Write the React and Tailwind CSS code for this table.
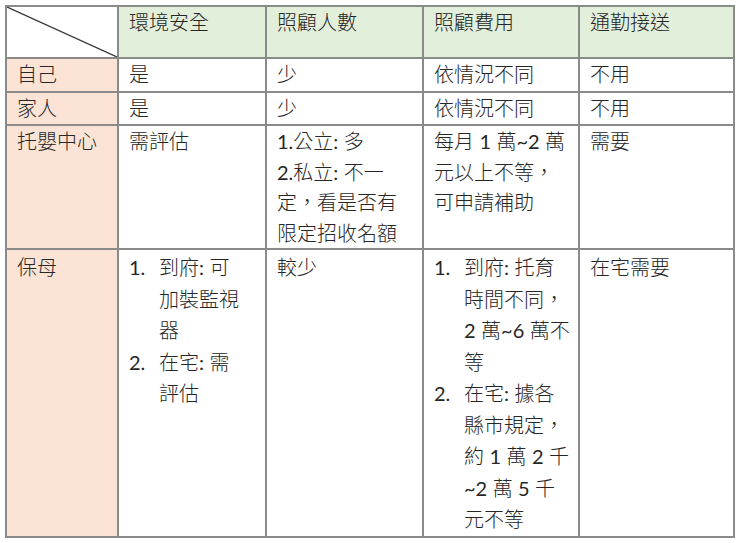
const font = { fontFamily: '"Lato", "Noto Sans CJK TC", sans-serif' };

// latin runs (digits, ~, colon) render at normal weight like Calibri in the source
function T({ children }) {
  const parts = String(children).split(/([0-9~.:]+)/);
  return parts.map((p, i) =>
    /^[0-9~.:]+$/.test(p) ? (
      <span key={i} className="font-normal">
        {p}
      </span>
    ) : (
      p
    )
  );
}

function Cell({ children, className = "" }) {
  return (
    <td
      className={`border-2 border-[#8a8a8a] align-top pl-[10px] pr-1 py-0 text-[20px] font-light text-[#262626] ${className}`}
    >
      {children}
    </td>
  );
}

function Lines({ lines }) {
  return lines.map((l, i) => (
    <div key={i}>
      <T>{l}</T>
    </div>
  ));
}

function Item({ n, lines }) {
  return (
    <div className="flex">
      <span className="w-[30px] shrink-0 font-normal">{n}.</span>
      <div>
        <Lines lines={lines} />
      </div>
    </div>
  );
}

export default function App() {
  const headers = ["環境安全", "照顧人數", "照顧費用", "通勤接送"];

  return (
    <div className="w-[740px] h-[543px] bg-white pt-[5px] pl-[5px]" style={font}>
      <table className="border-collapse table-fixed w-[728px]">
        <colgroup>
          <col className="w-[112px]" />
          <col className="w-[148px]" />
          <col className="w-[157px]" />
          <col className="w-[156px]" />
          <col className="w-[155px]" />
        </colgroup>
        <thead>
          <tr className="h-[52px] leading-[31.5px]">
            <th className="relative border-2 border-[#8a8a8a] bg-white p-0">
              <svg
                className="absolute inset-0 w-full h-full"
                viewBox="0 0 100 100"
                preserveAspectRatio="none"
              >
                <line x1="0" y1="0" x2="100" y2="100" stroke="#3a3a3a" strokeWidth="1.3" vectorEffect="non-scaling-stroke" />
              </svg>
            </th>
            {headers.map((h) => (
              <th
                key={h}
                className="border-2 border-[#8a8a8a] bg-[#e2efda] align-top text-left pl-[10px] text-[20px] font-light text-[#262626]"
              >
                {h}
              </th>
            ))}
          </tr>
        </thead>
        <tbody>
          <tr className="h-[33px] leading-[31.5px]">
            <Cell className="bg-[#fbe4d5]">自己</Cell>
            <Cell>是</Cell>
            <Cell>少</Cell>
            <Cell>依情況不同</Cell>
            <Cell>不用</Cell>
          </tr>
          <tr className="h-[32px] leading-[31.5px]">
            <Cell className="bg-[#fbe4d5]">家人</Cell>
            <Cell>是</Cell>
            <Cell>少</Cell>
            <Cell>依情況不同</Cell>
            <Cell>不用</Cell>
          </tr>
          <tr className="h-[124px] leading-[30.5px]">
            <Cell className="bg-[#fbe4d5]">托嬰中心</Cell>
            <Cell>需評估</Cell>
            <Cell>
              <Lines lines={["1.公立:\u00a0多", "2.私立:\u00a0不一", "定，看是否有", "限定招收名額"]} />
            </Cell>
            <Cell>
              <Lines lines={["每月 1 萬~2 萬", "元以上不等，", "可申請補助"]} />
            </Cell>
            <Cell>需要</Cell>
          </tr>
          <tr className="h-[288px] leading-[31.5px]">
            <Cell className="bg-[#fbe4d5] pt-[2px]">保母</Cell>
            <Cell className="pt-[2px]">
              <Item n="1" lines={["到府:\u00a0可", "加裝監視", "器"]} />
              <Item n="2" lines={["在宅:\u00a0需", "評估"]} />
            </Cell>
            <Cell className="pt-[2px]">較少</Cell>
            <Cell className="pt-[2px]">
              <Item n="1" lines={["到府:\u00a0托育", "時間不同，", "2 萬~6 萬不", "等"]} />
              <Item n="2" lines={["在宅:\u00a0據各", "縣市規定，", "約 1 萬 2 千", "~2 萬 5 千", "元不等"]} />
            </Cell>
            <Cell className="pt-[2px]">在宅需要</Cell>
          </tr>
        </tbody>
      </table>
    </div>
  );
}
